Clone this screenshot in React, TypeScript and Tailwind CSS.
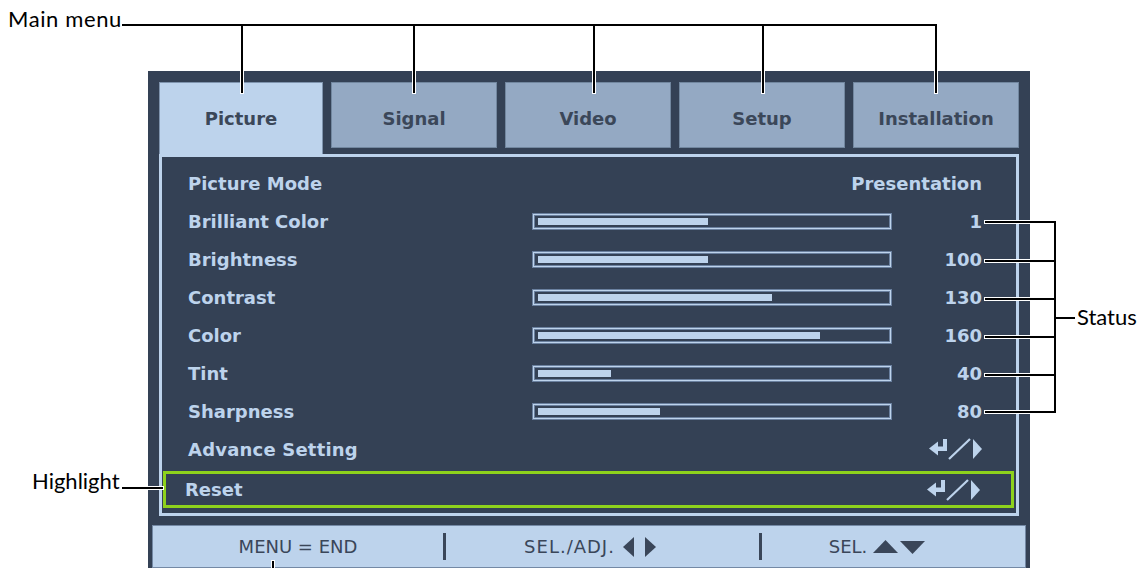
import React from "react";

const LIGHT = "#bdd3ec";

const sliders = [
  { label: "Brilliant Color", value: "1", fill: 170 },
  { label: "Brightness", value: "100", fill: 170 },
  { label: "Contrast", value: "130", fill: 234 },
  { label: "Color", value: "160", fill: 282 },
  { label: "Tint", value: "40", fill: 73 },
  { label: "Sharpness", value: "80", fill: 122 },
];

const tabs = ["Picture", "Signal", "Video", "Setup", "Installation"];

// return arrow + slash + right triangle
const EnterIcon = () => (
  <svg width="53" height="22" viewBox="0 0 53 22" fill={LIGHT}>
    <polygon points="0,10.5 9,3.5 9,17.5" />
    <rect x="8" y="8.5" width="10" height="4.5" />
    <rect x="14" y="1" width="4" height="12" />
    <line x1="20" y1="21" x2="41" y2="1" stroke={LIGHT} strokeWidth="2.2" />
    <polygon points="44,1 53,11 44,21" />
  </svg>
);

const Slider = ({ fill }: { fill: number }) => (
  <div className="w-[360px] h-[17px] bg-[#bdd3ec] p-[3px] shadow-[inset_0_0_0_1px_#6a809f]">
    <div className="h-full bg-[#344155] py-[2px] px-[3px] shadow-[0_0_0_1px_#6a809f]">
      <div className="h-full bg-[#bdd3ec]" style={{ width: fill }} />
    </div>
  </div>
);

const Line = ({ className }: { className: string }) => (
  <div className={"absolute bg-black shadow-[0_0_0_1px_#ffffff] " + className} />
);

export default function App() {
  return (
    <div className="relative w-[1144px] h-[568px] overflow-hidden bg-white pt-[71px] pl-[148px]">
      <div className="w-[882px] h-[497px] bg-[#344155] px-[11px] pt-[11px] flex flex-col font-[DejaVu_Sans]">
        {/* tabs */}
        <div className="flex gap-[8px] h-[72px] items-start">
          {tabs.map((t, i) =>
            i === 0 ? (
              <div
                key={t}
                className="flex-1 h-[72px] bg-[#bdd3ec] flex items-center justify-center text-[18px] font-bold text-[#3b4759] shadow-[inset_1px_1px_0_0_#7f94ae,inset_-1px_0_0_0_#7f94ae]"
              >
                {t}
              </div>
            ) : (
              <div
                key={t}
                className="flex-1 h-[66px] bg-[#94a9c3] border border-[#72879f] flex items-center justify-center pt-[6px] text-[18px] font-bold text-[#3b4759]"
              >
                {t}
              </div>
            )
          )}
        </div>

        {/* frame */}
        <div className="h-[362px] border-[3px] border-[#bdd3ec] pt-[7px] flex flex-col text-[18px] font-bold text-[#bdd3ec]">
          <div className="h-[38px] flex items-center pl-[26px] pr-[34px]">
            <span className="flex-1">Picture Mode</span>
            <span>Presentation</span>
          </div>
          {sliders.map((s) => (
            <div key={s.label} className="h-[38px] flex items-center pl-[26px] pr-[34px]">
              <span className="w-[344px]">{s.label}</span>
              <Slider fill={s.fill} />
              <span className="flex-1 text-right">{s.value}</span>
            </div>
          ))}
          <div className="h-[38px] flex items-center pl-[26px] pr-[34px]">
            <span className="flex-1 tracking-[0.2px]">Advance Setting</span>
            <EnterIcon />
          </div>
          <div className="mt-[3px] ml-[1px] mr-[2px] h-[37px] border-[3px] border-[#8ed21c] flex items-center pl-[19px] pr-[31px]">
            <span className="flex-1">Reset</span>
            <EnterIcon />
          </div>
        </div>

        {/* footer */}
        <div className="mt-[9px] -mx-[7px] h-[43px] bg-[#bdd3ec] border border-[#7489a5] flex items-center text-[18px] text-[#3a4659]">
          <div className="w-[290px] text-center">MENU = END</div>
          <div className="w-[3px] h-[27px] bg-[#3a4659]" />
          <div className="w-[313px] flex items-center justify-center gap-[8px] pr-[24px]">
            <span className="tracking-[1px]">SEL./ADJ.</span>
            <svg width="34" height="20" viewBox="0 0 34 20" fill="#3a4659">
              <polygon points="0,10 11,0 11,20" />
              <polygon points="22,0 33,10 22,20" />
            </svg>
          </div>
          <div className="w-[3px] h-[27px] bg-[#3a4659]" />
          <div className="flex-1 flex items-center justify-center gap-[6px] pr-[32px]">
            <span>SEL.</span>
            <svg width="53" height="14" viewBox="0 0 53 14" fill="#3a4659">
              <polygon points="0,13 12.5,0 25,13" />
              <polygon points="27,1 52,1 39.5,14" />
            </svg>
          </div>
        </div>
      </div>

      {/* callouts */}
      <div className="absolute left-[8px] top-[8px] font-[Lato] text-[22px] leading-none tracking-[0.6px] text-black">Main menu</div>
      <Line className="left-[241px] top-[24px] w-[2px] h-[69px]" />
      <Line className="left-[413px] top-[24px] w-[2px] h-[69px]" />
      <Line className="left-[593px] top-[24px] w-[2px] h-[69px]" />
      <Line className="left-[762px] top-[24px] w-[2px] h-[69px]" />
      <Line className="left-[935px] top-[24px] w-[2px] h-[69px]" />
      <div className="absolute left-[122px] top-[24px] w-[815px] h-[2px] bg-black" />

      <Line className="left-[985px] top-[221px] w-[70px] h-[2px]" />
      <Line className="left-[985px] top-[260px] w-[70px] h-[2px]" />
      <Line className="left-[985px] top-[298px] w-[70px] h-[2px]" />
      <Line className="left-[985px] top-[336px] w-[70px] h-[2px]" />
      <Line className="left-[985px] top-[374px] w-[70px] h-[2px]" />
      <Line className="left-[985px] top-[411px] w-[70px] h-[2px]" />
      <div className="absolute left-[1054px] top-[221px] w-[2px] h-[192px] bg-black" />
      <div className="absolute left-[1055px] top-[317px] w-[20px] h-[2px] bg-black" />
      <div className="absolute left-[1077px] top-[306px] font-[Lato] text-[22px] leading-none text-black">Status</div>

      <div className="absolute left-[32px] top-[470px] font-[Lato] text-[22px] leading-none text-black">Highlight</div>
      <Line className="left-[122px] top-[487px] w-[41px] h-[2px]" />

      <Line className="left-[272px] top-[561px] w-[2px] h-[10px]" />
    </div>
  );
}
